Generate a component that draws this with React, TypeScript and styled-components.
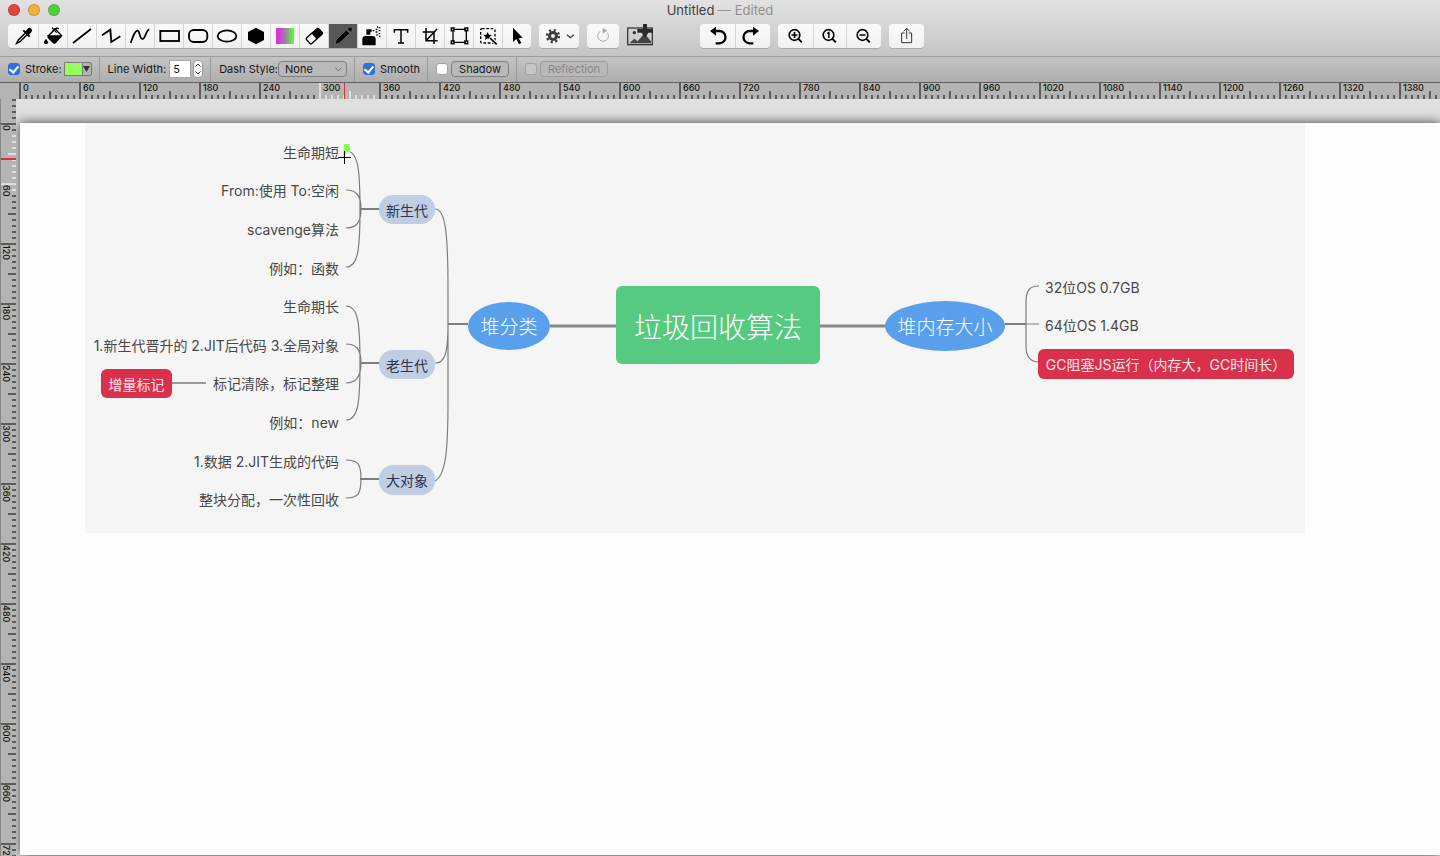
import React, { useEffect, useState } from 'react';
import styled, { createGlobalStyle, css } from 'styled-components';

const uiFont = 'Inter, "Liberation Sans", sans-serif';

const GlobalStyle = createGlobalStyle`
  * { box-sizing: border-box; }
  body { margin: 0; font-family: ${uiFont}; }
`;

const Window = styled.div`
  display: flex;
  flex-direction: column;
  height: 100vh;
  overflow: hidden;
  background: #e0e0e0;
`;

/* ---------- title bar and tools ---------- */

const Header = styled.header`
  flex: none;
  height: 57px;
  background: linear-gradient(#e2e2e2, #c5c5c5);
  border-bottom: 1px solid #9b9b9b;
`;

const TitleBar = styled.div`
  display: grid;
  grid-template-columns: 1fr auto 1fr;
  align-items: center;
  height: 19px;
  padding: 0 8px;
`;

const Lights = styled.div`
  display: flex;
  gap: 8px;
`;

const Light = styled.button<{ $color: string }>`
  width: 12px;
  height: 12px;
  padding: 0;
  border: 1px solid rgba(0, 0, 0, 0.14);
  border-radius: 50%;
  background: ${(p) => p.$color};
`;

const Title = styled.h1`
  margin: 0;
  font-size: 13px;
  line-height: 18px;
  font-weight: 400;
  color: #404040;
`;

const Muted = styled.span`
  color: #909090;
`;

const Toolbar = styled.div`
  display: flex;
  gap: 8px;
  padding: 5px 8px 0;
`;

const Group = styled.div<{ $far?: boolean }>`
  display: flex;
  flex: none;
  height: 24px;
  overflow: hidden;
  border-radius: 4px;
  background: linear-gradient(#fafafa, #f1f1f1);
  box-shadow: 0 1px 0 #a9a9a9;
  ${(p) => p.$far && 'margin-left: 39px;'}
`;

const ToolButton = styled.button<{ $w?: number; $active?: boolean }>`
  display: flex;
  align-items: center;
  justify-content: center;
  width: ${(p) => p.$w ?? 29}px;
  height: 24px;
  padding: 0;
  border: 0;
  color: #000;
  background: ${(p) => (p.$active ? '#585858' : 'transparent')};
  & + & { box-shadow: inset 1px 0 0 ${(p) => (p.$active ? '#585858' : '#d4d4d4')}; }
`;

const BareButton = styled.button`
  width: 26px;
  height: 24px;
  padding: 0;
  border: 0;
  background: none;
`;

const Glyph = ({ w = 29, children }: { w?: number; children: React.ReactNode }) => (
  <svg
    width={w}
    height={24}
    viewBox={`0 0 ${w * 3} 72`}
    fill="none"
    stroke="currentColor"
    strokeWidth={5.5}
    aria-hidden="true"
  >
    {children}
  </svg>
);

const solid = { fill: 'currentColor', stroke: 'none' };

const tools: { name: string; icon: React.ReactNode }[] = [
  {
    name: 'Color picker',
    icon: (
      <>
        <path d="M49 27 28 48l-5 10 10-5 21-21" strokeWidth={4.5} />
        <path d="M43 19 62 38" strokeWidth={6} />
        <path {...solid} d="m47 25 9-11q6-5 11 0t0 11L57 35z" />
      </>
    ),
  },
  {
    name: 'Fill',
    icon: (
      <>
        <path d="M31 35 52 15 71 35 52 55z" strokeWidth={4} />
        <path {...solid} d="M28 34h45L53 58q-4 3-8 0L29 42z" />
        <path d="m42 11 14 15M43 23q8-14 20-9" strokeWidth={4} />
        <path {...solid} d="M24 44q6 8 6 11a6 6 0 0 1-12 0q0-3 6-11z" />
      </>
    ),
  },
  { name: 'Line', icon: <path d="M18 57 72 15" strokeWidth={5} /> },
  { name: 'Polyline', icon: <path d="M18 34 43 17 46 54 73 37" strokeWidth={5.5} /> },
  { name: 'Curve', icon: <path d="M17 57C25 34 31 18 38 20S44 47 53 45 62 20 73 16" strokeWidth={5} /> },
  { name: 'Rectangle', icon: <rect x="19" y="21" width="56" height="30" /> },
  { name: 'Rounded rectangle', icon: <rect x="18" y="18" width="55" height="36" rx="14" /> },
  { name: 'Ellipse', icon: <ellipse cx="45" cy="36" rx="28" ry="17" /> },
  { name: 'Polygon', icon: <path {...solid} d="M45 11 69 24V48L45 61 21 48V24z" /> },
  {
    name: 'Gradient',
    icon: (
      <>
        <defs>
          <linearGradient id="tool-gradient">
            <stop offset=".1" stopColor="#e12ee0" />
            <stop offset=".5" stopColor="#a07ca5" />
            <stop offset=".95" stopColor="#5cf83a" />
          </linearGradient>
        </defs>
        <rect x="18" y="12" width="54" height="48" fill="url(#tool-gradient)" stroke="none" />
      </>
    ),
  },
  {
    name: 'Eraser',
    icon: (
      <>
        <rect x="22" y="25" width="48" height="23" rx="4" transform="rotate(-42 46 37)" strokeWidth={4} />
        <path {...solid} d="m37 28 18-14q4-3 7 0l9 10q3 4-1 7L53 46z" />
      </>
    ),
  },
  {
    name: 'Pencil',
    icon: (
      <g fill="#050505" stroke="#8c8c8c" strokeWidth={1.5}>
        <path d="M21 61 25 47 55 18 65 28 35 57z" />
        <path d="m58 16 5-6q4-3 8 1t1 8l-5 6z" />
      </g>
    ),
  },
  {
    name: 'Airbrush',
    icon: (
      <>
        <path {...solid} d="M16 64V44q0-7 8-8h24q8 1 8 8v20zM28 32V16h16v7l-4 2v7z" />
        <path
          d="M47 20h5M56 16h5M56 24h5M65 11h5M65 20h5M65 29h5M58 33h4M66 37h4M60 9h3"
          strokeWidth={4}
        />
      </>
    ),
  },
  {
    name: 'Text',
    icon: <path d="M25 26V17H65V26M45 17V57M36 57H54" strokeWidth={4.5} />,
  },
  {
    name: 'Crop',
    icon: <path d="M23 24H57V60M33 12V50H68M33 50 66 15" strokeWidth={4.5} />,
  },
  {
    name: 'Transform',
    icon: (
      <>
        <path d="M30 16H64M30 55H64M27 20V51M67 20V51" strokeWidth={4} />
        <g strokeWidth={4.5}>
          <rect x="22" y="12" width="8" height="8" />
          <rect x="63" y="12" width="8" height="8" />
          <rect x="22" y="51" width="8" height="8" />
          <rect x="63" y="51" width="8" height="8" />
        </g>
      </>
    ),
  },
  {
    name: 'Magic selection',
    icon: (
      <>
        <rect x="23" y="14" width="43" height="43" rx="4" strokeDasharray="8 5" strokeWidth={4} />
        <path {...solid} d="m44 24 4 8 9 1-7 6 2 9-8-5-8 5 2-9-7-6 9-1z" />
        <path d="M50 41 72 61" stroke="#f4f4f4" strokeWidth={11} />
        <path d="M51 42 71 61" strokeWidth={5} />
      </>
    ),
  },
  {
    name: 'Select',
    icon: <path {...solid} d="M33 11V54L43 45 51 61 58 57 50 43 62 41z" />,
  },
];

const Magnifier = ({ w, children }: { w: number; children: React.ReactNode }) => {
  const c = w * 1.5;
  return (
    <Glyph w={w}>
      <g transform={`translate(${c - 53} 0)`}>
        <circle cx="50" cy="33" r="16" strokeWidth={5} />
        <path d="M61 44 72 55" strokeWidth={6} />
        {children}
      </g>
    </Glyph>
  );
};

/* ---------- options bar ---------- */

const OptionsBar = styled.div`
  display: flex;
  flex: none;
  height: 26px;
  background: linear-gradient(#c4c4c4, #aeaeae);
  border-bottom: 1px solid #5e5e5e;
  font-size: 11px;
  color: #161616;
`;

const Option = styled.div`
  display: flex;
  align-items: center;
  padding: 0 7px 1px 8px;
  & + & { border-left: 1px solid #999; }
`;

const Check = styled.input.attrs({ type: 'checkbox' })`
  appearance: none;
  display: grid;
  place-items: center;
  width: 12px;
  height: 12px;
  margin: 0;
  border: 1px solid #a2a2a2;
  border-radius: 3px;
  background: #fff;
  &:checked { background: #2f6fde; border-color: #2f6fde; }
  &:checked::after {
    content: '';
    width: 4px;
    height: 7px;
    margin-bottom: 2px;
    border: solid #fff;
    border-width: 0 2px 2px 0;
    transform: rotate(40deg);
  }
  &:disabled { background: #c6c6c6; }
`;

const Label = styled.label`
  line-height: 16px;
  white-space: nowrap;
  ${Check} + & { margin-left: 5px; }
`;

const Swatch = styled.button`
  width: 19px;
  height: 14px;
  margin-left: 2px;
  padding: 0;
  border: 1px solid #7b7b7b;
  background: #96ff60;
`;

const SwatchMenu = styled.button`
  display: grid;
  place-items: center;
  width: 9px;
  height: 14px;
  padding: 0;
  border: 1px solid #777;
  border-left: 0;
  border-radius: 0 3px 3px 0;
  background: #b4b4b4;
`;

const WidthInput = styled.input`
  width: 22px;
  height: 18px;
  margin-left: 3px;
  padding: 0 3px;
  border: 1px solid #a5a5a5;
  background: #fff;
  font: 11px ${uiFont};
  color: #161616;
`;

const Stepper = styled.div`
  display: flex;
  flex-direction: column;
  width: 10px;
  height: 18px;
  margin-left: 2px;
  border: 1px solid #999;
  border-radius: 4px;
  background: #fafafa;
`;

const Step = styled.button`
  display: grid;
  place-items: center;
  width: 8px;
  height: 8px;
  padding: 0;
  border: 0;
  background: none;
`;

const boxed = css`
  height: 16px;
  border: 1px solid #7f7f7f;
  border-radius: 4px;
  background: #b9b9b9;
  font: 11px ${uiFont};
  color: inherit;
`;

const SelectWrap = styled.span`
  display: grid;
  align-items: center;
  & > * { grid-area: 1 / 1; }
  & > svg { justify-self: end; margin-right: 5px; pointer-events: none; }
`;

const Select = styled.select`
  ${boxed}
  appearance: none;
  width: 69px;
  padding: 0 6px;
`;

const Effect = styled.button<{ $w: number }>`
  ${boxed}
  width: ${(p) => p.$w}px;
  margin-left: 3px;
  padding: 0;
  &:disabled { border-color: #9c9c9c; color: #868686; }
`;

/* ---------- rulers ---------- */

const rulerFill = '#b4b4b4';
const tickColor = '#5c5c5c';

const TopRuler = styled.div`
  position: relative;
  display: flex;
  flex: none;
  height: 16px;
  padding-left: 19px;
  overflow: hidden;
  background: ${rulerFill};
`;

const SideRuler = styled.div`
  position: relative;
  display: flex;
  flex-direction: column;
  align-items: flex-end;
  flex: none;
  width: 16px;
  height: 100%;
  overflow: hidden;
  background: ${rulerFill};
  border-left: 1px solid #858585;
`;

const Segment = styled.div<{ $side?: boolean }>`
  position: relative;
  display: flex;
  flex: none;
  align-items: flex-end;
  flex-direction: ${(p) => (p.$side ? 'column' : 'row')};
`;

const Tick = styled.span<{ $side?: boolean; $size: number; $light?: boolean }>`
  flex: none;
  ${(p) =>
    p.$side
      ? css`
          width: ${p.$size}px;
          height: 6px;
          border-top: 2px solid ${p.$light ? '#dedede' : tickColor};
        `
      : css`
          width: 6px;
          height: ${p.$size}px;
          border-left: 2px solid ${p.$light ? '#dedede' : tickColor};
        `}
`;

const Mark = styled.span<{ $side?: boolean }>`
  position: absolute;
  font-size: 9px;
  line-height: 10px;
  font-weight: 500;
  color: #111;
  ${(p) => (p.$side ? 'writing-mode: vertical-rl; top: 2px; left: 1px;' : 'top: 0; left: 4px;')}
`;

const Pointer = styled.span<{ $side?: boolean }>`
  position: absolute;
  z-index: 1;
  background: #dc2f3a;
  ${(p) =>
    p.$side
      ? 'left: 0; top: 59px; width: 16px; height: 2px;'
      : 'left: 344px; top: 0; width: 1px; height: 16px;'}
`;

const tickSize = (i: number) => (i === 0 ? 16 : i === 5 ? 8 : 4);

function RulerSegment({
  start,
  side,
  light,
}: {
  start: number;
  side?: boolean;
  light: [number, number];
}) {
  return (
    <Segment $side={side}>
      {Array.from({ length: 10 }, (_, i) => {
        const value = start + i * 6;
        return (
          <Tick
            key={i}
            $side={side}
            $size={tickSize(i)}
            $light={value >= light[0] && value <= light[1]}
          />
        );
      })}
      <Mark $side={side}>{start}</Mark>
    </Segment>
  );
}

const marksFor = (length: number) =>
  Array.from({ length: Math.max(1, Math.ceil(length / 60)) }, (_, i) => i * 60);

function useWindowSize() {
  const read = () => ({ width: window.innerWidth, height: window.innerHeight });
  const [size, setSize] = useState(read);
  useEffect(() => {
    const update = () => setSize(read());
    window.addEventListener('resize', update);
    return () => window.removeEventListener('resize', update);
  }, []);
  return size;
}

/* ---------- document ---------- */

const Workspace = styled.main`
  display: flex;
  flex: 1;
  min-height: 0;
`;

const Desk = styled.div`
  display: flex;
  flex: 1;
  min-width: 0;
  padding: 24px 0 1px 4px;
  overflow: hidden;
  background: #e0e0e0;
`;

const Page = styled.article`
  flex: 1;
  min-width: 0;
  padding-left: 65px;
  background: #fdfdfd;
  box-shadow: 0 0 11px rgba(0, 0, 0, 0.75);
`;

const MindMap = styled.section`
  position: relative;
  width: 1220px;
  height: 410px;
  background: #f5f5f5;
`;

const Wires = styled.svg`
  position: absolute;
  inset: 0;
  fill: none;
  stroke: #7d7d7d;
  stroke-width: 1.2;
`;

const nodeFont = 'Inter, "Noto Sans CJK SC", sans-serif';

const Leaf = styled.p<{ $y: number; $left?: number }>`
  position: absolute;
  top: ${(p) => p.$y}px;
  ${(p) => (p.$left ? `left: ${p.$left}px;` : 'right: 966px;')}
  margin: 0;
  font: 14px/20px ${nodeFont};
  white-space: nowrap;
  color: #484848;
`;

type Kind = 'root' | 'branch' | 'pill' | 'alert';

const kinds: Record<Kind, ReturnType<typeof css>> = {
  root: css`
    padding-top: 6px;
    border-radius: 6px;
    background: #56ca80;
    color: #fff;
    font-size: 28px;
    font-weight: 300;
  `,
  branch: css`
    padding-top: 4px;
    border-radius: 50%;
    background: #5a9fec;
    color: #fff;
    font-size: 19px;
    font-weight: 300;
  `,
  pill: css`
    padding-top: 2px;
    border-radius: 14px;
    background: #c0cde2;
    color: #2c3550;
    font-size: 14px;
  `,
  alert: css`
    padding-top: 2px;
    border-radius: 6px;
    background: #d9314c;
    color: #fbe4e8;
    font-size: 14px;
  `,
};

const Node = styled.div<{ $kind: Kind; $x: number; $y: number; $w: number; $h: number }>`
  position: absolute;
  left: ${(p) => p.$x}px;
  top: ${(p) => p.$y}px;
  width: ${(p) => p.$w}px;
  height: ${(p) => p.$h}px;
  display: flex;
  align-items: center;
  justify-content: center;
  font-family: ${nodeFont};
  line-height: 20px;
  white-space: nowrap;
  ${(p) => kinds[p.$kind]}
`;

const leaves: { text: string; y: number; left?: number }[] = [
  { text: '生命期短', y: 20 },
  { text: 'From:使用 To:空闲', y: 58 },
  { text: 'scavenge算法', y: 97 },
  { text: '例如：函数', y: 136 },
  { text: '生命期长', y: 174 },
  { text: '1.新生代晋升的 2.JIT后代码 3.全局对象', y: 213 },
  { text: '标记清除，标记整理', y: 251 },
  { text: '例如：new', y: 290 },
  { text: '1.数据 2.JIT生成的代码', y: 329 },
  { text: '整块分配，一次性回收', y: 367 },
  { text: '32位OS 0.7GB', y: 155, left: 960 },
  { text: '64位OS 1.4GB', y: 193, left: 960 },
];

const nodes: { text: string; kind: Kind; x: number; y: number; w: number; h: number }[] = [
  { text: '垃圾回收算法', kind: 'root', x: 531, y: 163, w: 204, h: 78 },
  { text: '堆分类', kind: 'branch', x: 383, y: 179, w: 82, h: 48 },
  { text: '堆内存大小', kind: 'branch', x: 800, y: 178, w: 120, h: 50 },
  { text: '新生代', kind: 'pill', x: 294, y: 72, w: 56, h: 29 },
  { text: '老生代', kind: 'pill', x: 294, y: 227, w: 56, h: 29 },
  { text: '大对象', kind: 'pill', x: 294, y: 342, w: 56, h: 30 },
  { text: '增量标记', kind: 'alert', x: 16, y: 246, w: 71, h: 29 },
  { text: 'GC阻塞JS运行（内存大，GC时间长）', kind: 'alert', x: 953, y: 226, w: 256, h: 30 },
];

export default function App() {
  const { width, height } = useWindowSize();
  return (
    <Window>
      <GlobalStyle />
      <Header>
        <TitleBar>
          <Lights>
            <Light $color="#e0443e" aria-label="Close" />
            <Light $color="#f0b03a" aria-label="Minimize" />
            <Light $color="#53cf3f" aria-label="Zoom window" />
          </Lights>
          <Title>
            Untitled <Muted>— Edited</Muted>
          </Title>
        </TitleBar>
        <Toolbar>
          <Group>
            {tools.map((t, i) => (
              <ToolButton key={t.name} aria-label={t.name} $w={i === 0 ? 30 : 29} $active={t.name === 'Pencil'}>
                <Glyph>{t.icon}</Glyph>
              </ToolButton>
            ))}
          </Group>
          <Group>
            <ToolButton $w={40} aria-label="Settings">
              <Glyph w={40}>
                <g stroke="#3c3c3c">
                  <circle cx="42" cy="36" r="10.5" strokeWidth={9} />
                  <circle cx="42" cy="36" r="18" strokeWidth={7} strokeDasharray="6.4 7.74" />
                  <path d="m84 32 10 9 10-9" strokeWidth={4} />
                </g>
              </Glyph>
            </ToolButton>
          </Group>
          <Group>
            <ToolButton $w={32} aria-label="Rotate">
              <Glyph w={32}>
                <g stroke="#a8a8a8" strokeWidth={3}>
                  <path d="M40 22A16 16 0 1 0 61 26" />
                  <path d="M47 11 61 20 47 29z" fill="#a8a8a8" stroke="none" />
                </g>
              </Glyph>
            </ToolButton>
          </Group>
          <BareButton aria-label="Insert picture">
            <svg width="26" height="24" viewBox="0 0 78 72" aria-hidden="true">
              <rect x="2" y="12" width="74" height="50" fill="none" stroke="#3a3a3a" strokeWidth="4" />
              <circle cx="22" cy="26" r="5" fill="#333" />
              <path d="M7 58 22 44 32 52 52 28 72 52V58z" fill="#444" />
              <path d="M31 15H48V0H60V15H77V26H64L54 42 44 26H31z" fill="#2a2a2a" />
            </svg>
          </BareButton>
          <Group $far>
            <ToolButton $w={35} aria-label="Undo">
              <Glyph w={35}>
                <path d="M42 21H58A18 18 0 0 1 58 58H47" strokeWidth={7} />
                <path {...solid} d="M48 8V35L30 21z" />
              </Glyph>
            </ToolButton>
            <ToolButton $w={35} aria-label="Redo">
              <Glyph w={35}>
                <path d="M60 21H44A18 18 0 0 0 44 58H55" strokeWidth={7} />
                <path {...solid} d="M54 8V35L72 21z" />
              </Glyph>
            </ToolButton>
          </Group>
          <Group>
            <ToolButton $w={35} aria-label="Zoom in">
              <Magnifier w={35}>
                <path d="M41 33H59M50 24V42" strokeWidth={5} />
              </Magnifier>
            </ToolButton>
            <ToolButton $w={33} aria-label="Actual size">
              <Magnifier w={33}>
                <path d="M46 29 51 26V42" strokeWidth={4.5} />
              </Magnifier>
            </ToolButton>
            <ToolButton $w={35} aria-label="Zoom out">
              <Magnifier w={35}>
                <path d="M41 33H59" strokeWidth={5} />
              </Magnifier>
            </ToolButton>
          </Group>
          <Group>
            <ToolButton $w={35} aria-label="Share">
              <Glyph w={35}>
                <g stroke="#333" strokeWidth={3}>
                  <path d="M47 27H38V56H68V27H59" />
                  <path d="M53 45V13M44 22 53 13 62 22" />
                </g>
              </Glyph>
            </ToolButton>
          </Group>
        </Toolbar>
      </Header>

      <OptionsBar>
        <Option>
          <Check id="stroke" defaultChecked />
          <Label htmlFor="stroke">Stroke:</Label>
          <Swatch aria-label="Stroke color" />
          <SwatchMenu aria-label="Stroke color menu">
            <svg width="7" height="6" viewBox="0 0 7 6" aria-hidden="true">
              <path d="M0 0H7L3.5 6z" fill="#333" />
            </svg>
          </SwatchMenu>
        </Option>
        <Option>
          <Label htmlFor="line-width">Line Width:</Label>
          <WidthInput id="line-width" defaultValue="5" />
          <Stepper>
            <Step aria-label="Increase">
              <svg width="6" height="4" viewBox="0 0 6 4" fill="none" stroke="#222" aria-hidden="true">
                <path d="M.5 3.5 3 1 5.5 3.5" />
              </svg>
            </Step>
            <Step aria-label="Decrease">
              <svg width="6" height="4" viewBox="0 0 6 4" fill="none" stroke="#222" aria-hidden="true">
                <path d="M.5 .5 3 3 5.5 .5" />
              </svg>
            </Step>
          </Stepper>
        </Option>
        <Option>
          <Label htmlFor="dash">Dash Style:</Label>
          <SelectWrap>
            <Select id="dash">
              <option>None</option>
            </Select>
            <svg width="7" height="5" viewBox="0 0 7 5" fill="none" stroke="#777" aria-hidden="true">
              <path d="M.5 .5 3.5 4 6.5 .5" />
            </svg>
          </SelectWrap>
        </Option>
        <Option>
          <Check id="smooth" defaultChecked />
          <Label htmlFor="smooth">Smooth</Label>
        </Option>
        <Option>
          <Check aria-label="Shadow" />
          <Effect $w={58}>Shadow</Effect>
        </Option>
        <Option>
          <Check aria-label="Reflection" disabled />
          <Effect $w={68} disabled>
            Reflection
          </Effect>
        </Option>
      </OptionsBar>

      <TopRuler>
        {marksFor(width - 19).map((s) => (
          <RulerSegment key={s} start={s} light={[300, 354]} />
        ))}
        <Pointer />
      </TopRuler>

      <Workspace>
        <SideRuler>
          <Segment $side>
            {[0, 1, 2, 3].map((i) => (
              <Tick key={i} $side $size={4} />
            ))}
          </Segment>
          {marksFor(height - 123).map((s) => (
            <RulerSegment key={s} start={s} side light={[12, 66]} />
          ))}
          <Pointer $side />
        </SideRuler>
        <Desk>
          <Page>
            <MindMap>
              <Wires width="1220" height="410" viewBox="85 123 1220 410" aria-hidden="true">
                <path d="M346 151C358 151 360 168 360 209M346 190C356 190 361 195 361 209M346 228C356 228 361 223 361 209M346 267C358 267 360 250 360 209" />
                <path d="M346 306C358 306 360 322 360 363M346 344C356 344 361 349 361 363M346 383C356 383 361 377 361 363M346 420C358 420 360 404 360 363" />
                <path d="M346 460C358 460 361 464 361 479M346 498C358 498 361 494 361 479" />
                <path d="M435 209C446 209 448 236 448 290V324M435 363C444 363 448 356 448 324M435 481C446 475 448 450 448 400V324" />
                <path d="M1026 324V302C1026 290 1030 286 1039 286M1026 324V346C1026 357 1030 362 1039 362M1026 324H1039" />
                <path d="M360 209H380M360 363H380M360 479H380M448 324H468M1005 324H1026" strokeWidth="2" />
                <path d="M172 383H206" stroke="#999" strokeWidth="2" />
                <path d="M550 326H616M820 326H886" stroke="#888" strokeWidth="3" />
                <path d="M344 144h6v8h-3l-4 7z" fill="#8dfb5c" stroke="none" />
                <path d="M344.5 151v13M338 157.5h13" stroke="#000" strokeWidth="1" />
              </Wires>
              {leaves.map((l) => (
                <Leaf key={l.text} $y={l.y} $left={l.left}>
                  {l.text}
                </Leaf>
              ))}
              {nodes.map((n) => (
                <Node key={n.text} $kind={n.kind} $x={n.x} $y={n.y} $w={n.w} $h={n.h}>
                  {n.text}
                </Node>
              ))}
            </MindMap>
          </Page>
        </Desk>
      </Workspace>
    </Window>
  );
}
